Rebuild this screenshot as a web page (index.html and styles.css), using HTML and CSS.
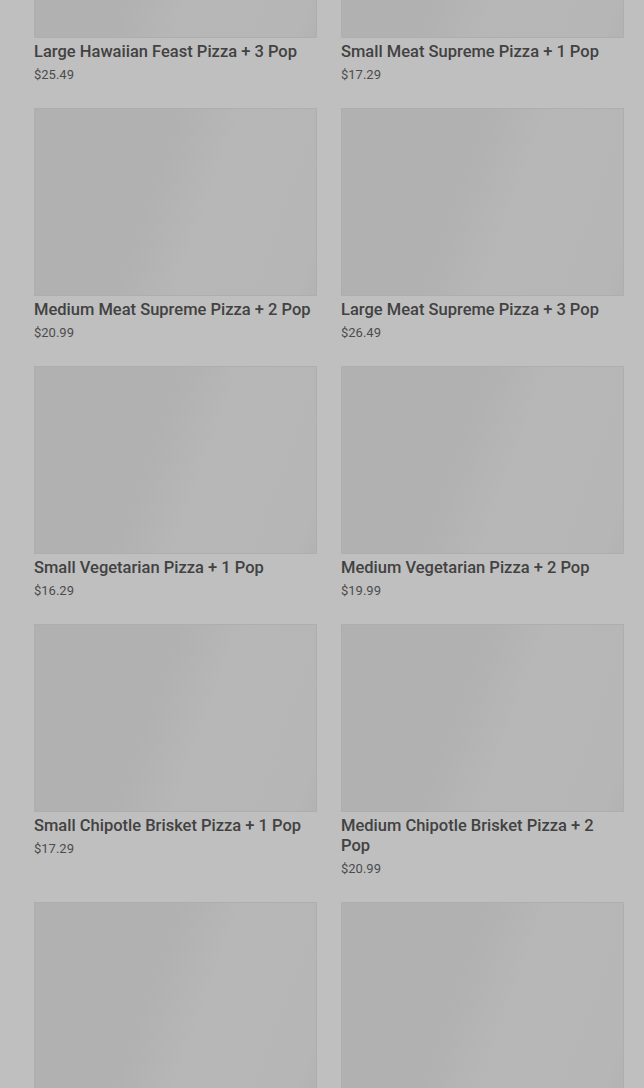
FILE: index.html
```html
<!DOCTYPE html>
<html lang="en">
<head>
<meta charset="utf-8">
<title>Menu</title>
<link rel="stylesheet" href="styles.css">
</head>
<body>
<main class="menu">
  <!-- products are listed in menu order, two per row -->
  <a class="item" href="#"><div class="photo"></div><h3>Large Hawaiian Feast Pizza + 3 Pop</h3><p class="price">$25.49</p></a>
  <a class="item" href="#"><div class="photo"></div><h3>Small Meat Supreme Pizza + 1 Pop</h3><p class="price">$17.29</p></a>
  <a class="item" href="#"><div class="photo"></div><h3>Medium Meat Supreme Pizza + 2 Pop</h3><p class="price">$20.99</p></a>
  <a class="item" href="#"><div class="photo"></div><h3>Large Meat Supreme Pizza + 3 Pop</h3><p class="price">$26.49</p></a>
  <a class="item" href="#"><div class="photo"></div><h3>Small Vegetarian Pizza + 1 Pop</h3><p class="price">$16.29</p></a>
  <a class="item" href="#"><div class="photo"></div><h3>Medium Vegetarian Pizza + 2 Pop</h3><p class="price">$19.99</p></a>
  <a class="item" href="#"><div class="photo"></div><h3>Small Chipotle Brisket Pizza + 1 Pop</h3><p class="price">$17.29</p></a>
  <a class="item" href="#"><div class="photo"></div><h3>Medium Chipotle Brisket Pizza + 2 Pop</h3><p class="price">$20.99</p></a>
  <a class="item" href="#"><div class="photo"></div></a>
  <a class="item" href="#"><div class="photo"></div></a>
</main>
</body>
</html>
```

FILE: styles.css
```css
html {
  background: #bfbfbf;
  color: #424242;
}
body {
  margin: 0;
  overflow: hidden;
  font-family: Roboto, "Liberation Sans", sans-serif;
}
.menu {
  display: grid;
  grid-template-columns: 1fr 1fr;
  column-gap: 24px;
  row-gap: 25px;
  margin-top: -150px;
  padding: 0 20px 0 34px;
}
.item {
  display: block;
  color: inherit;
  text-decoration: none;
}
.photo {
  height: 188px;
  background: linear-gradient(110deg, #b1b1b1 42%, #b7b7b7 60%, #b6b6b6 94%, #b2b2b2);
  box-shadow: inset 0 0 0 1px #aeaeae;
}
.item h3 {
  margin: 4px 0 0;
  font-size: 16.5px;
  font-weight: 500;
  line-height: 20px;
}
.price {
  margin: 5px 0 0;
  font-size: 13px;
  line-height: 16px;
  color: #4c4c4c;
}
```
